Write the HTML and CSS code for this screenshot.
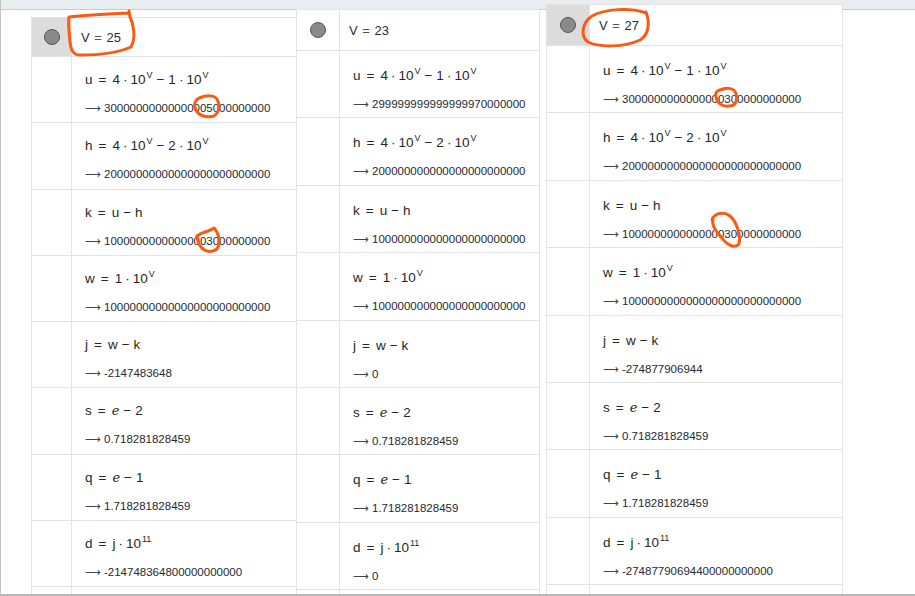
FILE: index.html
```html
<!DOCTYPE html>
<html lang="en">
<head>
<meta charset="utf-8">
<title>Algebra view comparison</title>
<link rel="stylesheet" href="styles.css">
</head>
<body>
<div class="desk">
  <section class="panel p1">
    <div class="row head sel">
      <div class="gut"><span class="ball"></span></div>
      <div class="cell"><span class="def">V <span class="rel">=</span> 25</span></div>
    </div>
    <div class="row">
      <div class="gut"></div>
      <div class="cell">
        <div class="eq">u<span class="rel">=</span>4<span class="mul">·</span>10<sup>V</sup><span class="bin">−</span>1<span class="mul">·</span>10<sup>V</sup></div>
        <div class="res"><span class="arr">⟶</span>30000000000000005000000000</div>
      </div>
    </div>
    <div class="row">
      <div class="gut"></div>
      <div class="cell">
        <div class="eq">h<span class="rel">=</span>4<span class="mul">·</span>10<sup>V</sup><span class="bin">−</span>2<span class="mul">·</span>10<sup>V</sup></div>
        <div class="res"><span class="arr">⟶</span>20000000000000000000000000</div>
      </div>
    </div>
    <div class="row">
      <div class="gut"></div>
      <div class="cell">
        <div class="eq">k<span class="rel">=</span>u<span class="bin">−</span>h</div>
        <div class="res"><span class="arr">⟶</span>10000000000000003000000000</div>
      </div>
    </div>
    <div class="row">
      <div class="gut"></div>
      <div class="cell">
        <div class="eq">w<span class="rel">=</span>1<span class="mul">·</span>10<sup>V</sup></div>
        <div class="res"><span class="arr">⟶</span>10000000000000000000000000</div>
      </div>
    </div>
    <div class="row">
      <div class="gut"></div>
      <div class="cell">
        <div class="eq">j<span class="rel">=</span>w<span class="bin">−</span>k</div>
        <div class="res"><span class="arr">⟶</span>-2147483648</div>
      </div>
    </div>
    <div class="row">
      <div class="gut"></div>
      <div class="cell">
        <div class="eq">s<span class="rel">=</span><i>e</i><span class="bin">−</span>2</div>
        <div class="res"><span class="arr">⟶</span>0.718281828459</div>
      </div>
    </div>
    <div class="row">
      <div class="gut"></div>
      <div class="cell">
        <div class="eq">q<span class="rel">=</span><i>e</i><span class="bin">−</span>1</div>
        <div class="res"><span class="arr">⟶</span>1.718281828459</div>
      </div>
    </div>
    <div class="row">
      <div class="gut"></div>
      <div class="cell">
        <div class="eq">d<span class="rel">=</span>j<span class="mul">·</span>10<sup>11</sup></div>
        <div class="res"><span class="arr">⟶</span>-214748364800000000000</div>
      </div>
    </div>
    <div class="row">
      <div class="gut"></div>
      <div class="cell"></div>
    </div>
  </section>

  <section class="panel p2">
    <div class="row head">
      <div class="gut"><span class="ball"></span></div>
      <div class="cell"><span class="def">V <span class="rel">=</span> 23</span></div>
    </div>
    <div class="row">
      <div class="gut"></div>
      <div class="cell">
        <div class="eq">u<span class="rel">=</span>4<span class="mul">·</span>10<sup>V</sup><span class="bin">−</span>1<span class="mul">·</span>10<sup>V</sup></div>
        <div class="res"><span class="arr">⟶</span>299999999999999970000000</div>
      </div>
    </div>
    <div class="row">
      <div class="gut"></div>
      <div class="cell">
        <div class="eq">h<span class="rel">=</span>4<span class="mul">·</span>10<sup>V</sup><span class="bin">−</span>2<span class="mul">·</span>10<sup>V</sup></div>
        <div class="res"><span class="arr">⟶</span>200000000000000000000000</div>
      </div>
    </div>
    <div class="row">
      <div class="gut"></div>
      <div class="cell">
        <div class="eq">k<span class="rel">=</span>u<span class="bin">−</span>h</div>
        <div class="res"><span class="arr">⟶</span>100000000000000000000000</div>
      </div>
    </div>
    <div class="row">
      <div class="gut"></div>
      <div class="cell">
        <div class="eq">w<span class="rel">=</span>1<span class="mul">·</span>10<sup>V</sup></div>
        <div class="res"><span class="arr">⟶</span>100000000000000000000000</div>
      </div>
    </div>
    <div class="row">
      <div class="gut"></div>
      <div class="cell">
        <div class="eq">j<span class="rel">=</span>w<span class="bin">−</span>k</div>
        <div class="res"><span class="arr">⟶</span>0</div>
      </div>
    </div>
    <div class="row">
      <div class="gut"></div>
      <div class="cell">
        <div class="eq">s<span class="rel">=</span><i>e</i><span class="bin">−</span>2</div>
        <div class="res"><span class="arr">⟶</span>0.718281828459</div>
      </div>
    </div>
    <div class="row">
      <div class="gut"></div>
      <div class="cell">
        <div class="eq">q<span class="rel">=</span><i>e</i><span class="bin">−</span>1</div>
        <div class="res"><span class="arr">⟶</span>1.718281828459</div>
      </div>
    </div>
    <div class="row">
      <div class="gut"></div>
      <div class="cell">
        <div class="eq">d<span class="rel">=</span>j<span class="mul">·</span>10<sup>11</sup></div>
        <div class="res"><span class="arr">⟶</span>0</div>
      </div>
    </div>
    <div class="row">
      <div class="gut"></div>
      <div class="cell"></div>
    </div>
  </section>

  <section class="panel p3">
    <div class="row head sel">
      <div class="gut"><span class="ball"></span></div>
      <div class="cell"><span class="def">V <span class="rel">=</span> 27</span></div>
    </div>
    <div class="row">
      <div class="gut"></div>
      <div class="cell">
        <div class="eq">u<span class="rel">=</span>4<span class="mul">·</span>10<sup>V</sup><span class="bin">−</span>1<span class="mul">·</span>10<sup>V</sup></div>
        <div class="res"><span class="arr">⟶</span>3000000000000000300000000000</div>
      </div>
    </div>
    <div class="row">
      <div class="gut"></div>
      <div class="cell">
        <div class="eq">h<span class="rel">=</span>4<span class="mul">·</span>10<sup>V</sup><span class="bin">−</span>2<span class="mul">·</span>10<sup>V</sup></div>
        <div class="res"><span class="arr">⟶</span>2000000000000000000000000000</div>
      </div>
    </div>
    <div class="row">
      <div class="gut"></div>
      <div class="cell">
        <div class="eq">k<span class="rel">=</span>u<span class="bin">−</span>h</div>
        <div class="res"><span class="arr">⟶</span>1000000000000000300000000000</div>
      </div>
    </div>
    <div class="row">
      <div class="gut"></div>
      <div class="cell">
        <div class="eq">w<span class="rel">=</span>1<span class="mul">·</span>10<sup>V</sup></div>
        <div class="res"><span class="arr">⟶</span>1000000000000000000000000000</div>
      </div>
    </div>
    <div class="row">
      <div class="gut"></div>
      <div class="cell">
        <div class="eq">j<span class="rel">=</span>w<span class="bin">−</span>k</div>
        <div class="res"><span class="arr">⟶</span>-274877906944</div>
      </div>
    </div>
    <div class="row">
      <div class="gut"></div>
      <div class="cell">
        <div class="eq">s<span class="rel">=</span><i>e</i><span class="bin">−</span>2</div>
        <div class="res"><span class="arr">⟶</span>0.718281828459</div>
      </div>
    </div>
    <div class="row">
      <div class="gut"></div>
      <div class="cell">
        <div class="eq">q<span class="rel">=</span><i>e</i><span class="bin">−</span>1</div>
        <div class="res"><span class="arr">⟶</span>1.718281828459</div>
      </div>
    </div>
    <div class="row">
      <div class="gut"></div>
      <div class="cell">
        <div class="eq">d<span class="rel">=</span>j<span class="mul">·</span>10<sup>11</sup></div>
        <div class="res"><span class="arr">⟶</span>-27487790694400000000000</div>
      </div>
    </div>
    <div class="row">
      <div class="gut"></div>
      <div class="cell"></div>
    </div>
  </section>

  <svg class="marks" width="915" height="596" viewBox="0 0 915 596" aria-hidden="true">
    <path d="M129,11 L130,17 C134,25 136,38 131,47 C120,52 100,55 80,55 C73,55 71,50 70,42 C69,32 68,24 69,17 C85,15 105,14 128,13"/>
    <path d="M200,98 C206,95 214,95 217,99 C220,104 220,112 214,116 C207,118 199,116 196,110 C193,104 195,99 202,97"/>
    <path d="M197,236 C203,231 209,232 214,228 C219,233 221,243 217,249 C212,253 205,252 201,247 C198,243 197,239 197,236"/>
    <path d="M646,13 C630,7 605,9 592,16 C582,23 580,36 588,42 C600,48 625,47 640,40 C649,35 650,22 646,12"/>
    <path d="M720,90 C727,87 735,88 736,94 C738,100 736,106 729,106 C722,107 717,103 716,97 C715,93 716,90 724,89"/>
    <path d="M712,220 C714,213 724,211 730,216 C737,222 741,236 739,244 C735,249 727,245 722,238 C717,232 711,226 713,218"/>
  </svg>
</div>
</body>
</html>
```

FILE: styles.css
```css
* { box-sizing: border-box; }

html, body {
  margin: 0;
  padding: 0;
}

body {
  width: 915px;
  height: 596px;
  overflow: hidden;
  font-family: "Liberation Sans", Arial, sans-serif;
  color: #333;
  background: linear-gradient(to bottom, #e8edf0 0, #e8edf0 9px, #c9cdd0 9px, #c9cdd0 10px, #ffffff 10px);
}

.desk {
  position: relative;
  display: flex;
  align-items: flex-start;
  height: 596px;
  overflow: hidden;
  border-left: 1px solid #c2c2c2;
  border-bottom: 2px solid #b8b8b8;
}

.panel {
  display: flex;
  flex-direction: column;
  background: #fff;
  border-top: 1px solid #e3e3e3;
  border-left: 1px solid #e3e3e3;
  border-right: 1px solid #e3e3e3;
  --row: 67.4px;
  --gut: 43px;
  --eqpad: 16px;
}

.p1 {
  margin-left: 30px;
  margin-top: 17px;
  width: 266px;
  --row: 66.25px;
  --gut: 40px;
  --eqpad: 14px;
}

.p2 {
  margin-left: -1px;
  margin-top: 9px;
  width: 244px;
}

.p3 {
  margin-left: 6px;
  margin-top: 4px;
  width: 297px;
}

.row {
  display: grid;
  grid-template-columns: var(--gut) 1fr;
  height: var(--row);
  border-bottom: 1px solid #e3e3e3;
  flex: none;
}

.row.head {
  height: 41px;
}

.p1 .row.head {
  height: 39px;
}

.gut {
  border-right: 1px solid #e3e3e3;
  display: flex;
  align-items: center;
  justify-content: center;
}

.row.sel .gut {
  background: #dcdcdc;
}

.ball {
  width: 16px;
  height: 16px;
  border-radius: 50%;
  background: #8a8a8a;
  border: 1px solid #555;
}

.cell {
  padding: var(--eqpad) 0 0 13px;
  min-width: 0;
}

.head .cell {
  display: flex;
  align-items: center;
  padding: 0 0 0 9px;
}

.def {
  font-size: 13px;
  color: #2b2b3b;
}

.def .rel {
  margin: 0 1px;
  color: #555;
}

.eq {
  height: 18px;
  line-height: 18px;
  font-size: 13.5px;
  color: #262626;
  white-space: nowrap;
}

.eq sup {
  font-size: 9px;
  vertical-align: 6px;
  line-height: 0;
  margin-left: 1px;
}

.eq i {
  font-family: "DejaVu Serif", "Liberation Serif", serif;
  font-size: 13px;
}

.rel {
  margin: 0 6px;
}

.mul {
  margin: 0 3px;
}

.bin {
  margin: 0 4px;
}

.res {
  margin-top: 10px;
  height: 18px;
  line-height: 18px;
  font-size: 11.5px;
  color: #262833;
  white-space: nowrap;
}

.arr {
  display: inline-block;
  width: 19px;
  color: #444;
  font-size: 11px;
}

.marks {
  position: absolute;
  top: 0;
  left: -1px;
  pointer-events: none;
}

.marks path {
  fill: none;
  stroke: #fb5a12;
  stroke-width: 3;
  stroke-linecap: round;
  stroke-linejoin: round;
}
```
